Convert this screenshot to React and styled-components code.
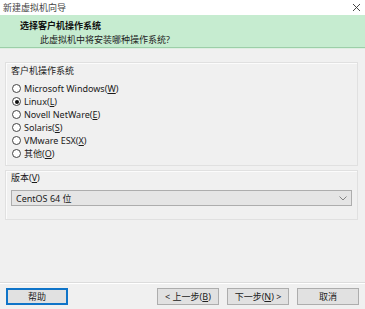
import styled, { createGlobalStyle } from "styled-components";

const GlobalStyle = createGlobalStyle`
  html, body {
    margin: 0;
    padding: 0;
    background: #f0f0f0;
  }
  * {
    box-sizing: border-box;
  }
`;

const systems = [
  { name: "Microsoft Windows", key: "W" },
  { name: "Linux", key: "L", checked: true },
  { name: "Novell NetWare", key: "E" },
  { name: "Solaris", key: "S" },
  { name: "VMware ESX", key: "X" },
  { name: "其他", key: "O" },
];

export default function App() {
  return (
    <>
      <GlobalStyle />
      <Window>
        <TitleBar>
          <span>新建虚拟机向导</span>
          <CloseIcon width="9" height="9" viewBox="0 0 9 9">
            <path d="M1 1L8 8M8 1L1 8" stroke="#333" strokeWidth="0.9" />
          </CloseIcon>
        </TitleBar>
        <Header>
          <HeaderTitle>选择客户机操作系统</HeaderTitle>
          <HeaderSub>此虚拟机中将安装哪种操作系统?</HeaderSub>
        </Header>
        <Content>
          <GroupBox>
            <GroupLabel>客户机操作系统</GroupLabel>
            <RadioList>
              {systems.map((s) => (
                <RadioRow key={s.key}>
                  <RadioCircle $checked={s.checked} />
                  <span>
                    {s.name}(<u>{s.key}</u>)
                  </span>
                </RadioRow>
              ))}
            </RadioList>
          </GroupBox>
          <GroupBox $compact>
            <GroupLabel>
              版本(<u>V</u>)
            </GroupLabel>
            <Select>
              <span>CentOS 64 位</span>
              <svg width="8" height="5" viewBox="0 0 8 5">
                <path d="M0.5 0.5L4 4L7.5 0.5" fill="none" stroke="#777" strokeWidth="0.9" />
              </svg>
            </Select>
          </GroupBox>
        </Content>
        <Footer>
          <Button $focused>帮助</Button>
          <ButtonGroup>
            <Button>
              &lt; 上一步(<u>B</u>)
            </Button>
            <Button>
              下一步(<u>N</u>) &gt;
            </Button>
            <Button>取消</Button>
          </ButtonGroup>
        </Footer>
      </Window>
    </>
  );
}

const Window = styled.div`
  width: 365px;
  height: 309px;
  display: flex;
  flex-direction: column;
  background: #f0f0f0;
  font-family: "Noto Sans", "Noto Sans CJK SC", sans-serif;
  font-size: 9px;
  color: #1a1a1a;
  overflow: hidden;
`;

const TitleBar = styled.div`
  height: 15px;
  flex-shrink: 0;
  background: #fff;
  display: flex;
  align-items: center;
  justify-content: space-between;
  padding: 0 4px 0 3px;
  color: #444;
  font-size: 9px;
`;

const CloseIcon = styled.svg`
  display: block;
`;

const Header = styled.div`
  height: 33px;
  flex-shrink: 0;
  background: #c6ecd0;
  border-bottom: 1px solid #9ccfa8;
  box-shadow: 0 1px 0 #dfeee3;
  padding: 5px 0 0 20px;
  display: flex;
  flex-direction: column;
`;

const HeaderTitle = styled.div`
  font-weight: bold;
  line-height: 12px;
  color: #111;
`;

const HeaderSub = styled.div`
  line-height: 12px;
  margin-top: 2px;
  padding-left: 20px;
  color: #222;
`;

const Content = styled.div`
  flex: 1;
  padding: 14px 7px 0 5px;
  display: flex;
  flex-direction: column;
  gap: 4px;
`;

const GroupBox = styled.div`
  border: 1px solid #e0e0e0;
  box-shadow: inset 1px 1px 0 #fbfbfb;
  padding: ${(p) => (p.$compact ? "1px 5px 13px 5px" : "2px 5px 5px 5px")};
  height: ${(p) => (p.$compact ? "50px" : "104px")};
`;

const GroupLabel = styled.div`
  line-height: 12px;
`;

const RadioList = styled.div`
  margin-top: 5px;
  display: flex;
  flex-direction: column;
`;

const RadioRow = styled.div`
  height: 13px;
  display: flex;
  align-items: center;
  gap: 3px;
  padding-left: 1px;
`;

const RadioCircle = styled.span`
  width: 9px;
  height: 9px;
  border-radius: 50%;
  border: 1px solid #444;
  background: #fff;
  display: flex;
  align-items: center;
  justify-content: center;
  &::after {
    content: "";
    width: 4px;
    height: 4px;
    border-radius: 50%;
    background: ${(p) => (p.$checked ? "#111" : "transparent")};
  }
`;

const Select = styled.div`
  margin-top: 6px;
  height: 16px;
  background: #e5e5e5;
  border: 1px solid #adadad;
  display: flex;
  align-items: center;
  justify-content: space-between;
  padding: 0 4px 0 4px;
`;

const Footer = styled.div`
  flex-shrink: 0;
  border-top: 1px solid #dcdcdc;
  box-shadow: inset 0 1px 0 #fff;
  padding: 5px 6px 4px 6px;
  display: flex;
  justify-content: space-between;
  align-items: center;
`;

const ButtonGroup = styled.div`
  display: flex;
  gap: 8px;
`;

const Button = styled.div`
  width: 62px;
  height: 17px;
  background: #e1e1e1;
  border: ${(p) => (p.$focused ? "2px solid #0f74c8" : "1px solid #adadad")};
  display: flex;
  align-items: center;
  justify-content: center;
  font-size: 9px;
  color: #222;
`;
